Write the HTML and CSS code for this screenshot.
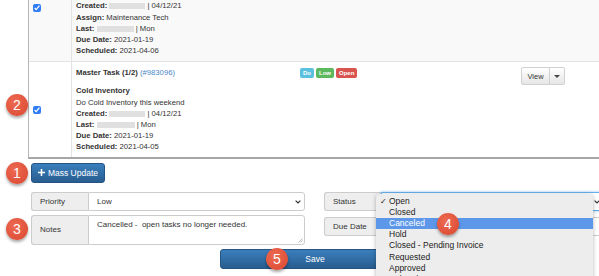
FILE: index.html
```html
<!DOCTYPE html>
<html lang="en">
<head>
  <meta charset="UTF-8" />
  <title>Task List - Mass Update</title>
  <link rel="stylesheet" href="styles.css">
</head>
<body>

<div class="tasks">
  <div class="task striped">
    <div class="check"><input type="checkbox" checked /></div>
    <div class="info">
      <div class="head">
        <div class="title"><b>Master Task (2/2)</b> <a href="#">(#983095)</a></div>
        <div class="labels">
          <span class="label do">Do</span><span class="label low">Low</span><span class="label open">Open</span>
        </div>
        <div class="btn-group">
          <button class="btn-view">View</button><button class="btn-caret"><span class="caret"></span></button>
        </div>
      </div>
      <div class="line"><b>Cold Inventory</b></div>
      <div class="line">Do Cold Inventory this weekend</div>
      <div class="line"><b>Created:</b> <span class="redact r-created"></span> | 04/12/21</div>
      <div class="line"><b>Assign:</b> Maintenance Tech</div>
      <div class="line"><b>Last:</b> <span class="redact r-last"></span> | Mon</div>
      <div class="line"><b>Due Date:</b> 2021-01-19</div>
      <div class="line"><b>Scheduled:</b> 2021-04-06</div>
    </div>
  </div>

  <div class="task">
    <div class="check"><input type="checkbox" checked /></div>
    <div class="info">
      <div class="head">
        <div class="title"><b>Master Task (1/2)</b> <a href="#">(#983096)</a></div>
        <div class="labels">
          <span class="label do">Do</span><span class="label low">Low</span><span class="label open">Open</span>
        </div>
        <div class="btn-group">
          <button class="btn-view">View</button><button class="btn-caret"><span class="caret"></span></button>
        </div>
      </div>
      <div class="line"><b>Cold Inventory</b></div>
      <div class="line">Do Cold Inventory this weekend</div>
      <div class="line"><b>Created:</b> <span class="redact r-created"></span> | 04/12/21</div>
      <div class="line"><b>Last:</b> <span class="redact r-last2"></span> | Mon</div>
      <div class="line"><b>Due Date:</b> 2021-01-19</div>
      <div class="line"><b>Scheduled:</b> 2021-04-05</div>
    </div>
  </div>
</div>

<div class="mass-row">
  <button class="btn-primary btn-mass">
    <svg width="7" height="7" viewBox="0 0 7 7"><path d="M2.7 0h1.6v2.7H7v1.6H4.3V7H2.7V4.3H0V2.7h2.7z" fill="#fff"/></svg>
    Mass Update
  </button>
</div>

<div class="mass-form">
  <div class="col">
    <div class="group">
      <span class="addon">Priority</span>
      <div class="control select">Low
        <svg class="chev" width="6" height="4" viewBox="0 0 6 4"><path d="M0.6 0.6L3 3L5.4 0.6" fill="none" stroke="#333" stroke-width="1.2"/></svg>
      </div>
    </div>
    <div class="group notes">
      <span class="addon">Notes</span>
      <div class="control textarea">Cancelled -&nbsp; open tasks no longer needed.
        <svg class="grip" width="5" height="5" viewBox="0 0 5 5"><path d="M0.5 4.5L4.5 0.5M2.5 4.5L4.5 2.5" stroke="#999" stroke-width="0.7"/></svg>
      </div>
    </div>
  </div>
  <div class="col">
    <div class="group status">
      <span class="addon">Status</span>
      <div class="control select focus">
        <svg class="chev" width="6" height="4" viewBox="0 0 6 4"><path d="M0.6 0.6L3 3L5.4 0.6" fill="none" stroke="#333" stroke-width="1.2"/></svg>
      </div>
      <ul class="menu">
        <li><span class="tick">✓</span>Open</li>
        <li>Closed</li>
        <li class="active">Canceled</li>
        <li>Hold</li>
        <li>Closed - Pending Invoice</li>
        <li>Requested</li>
        <li>Approved</li>
        <li>Deleted</li>
      </ul>
    </div>
    <div class="group due">
      <span class="addon">Due Date</span>
      <div class="control"></div>
    </div>
  </div>
</div>

<div class="save-row">
  <button class="btn-primary btn-save">Save</button>
</div>

<span class="step s1">1</span>
<span class="step s2">2</span>
<span class="step s3">3</span>
<span class="step s4">4</span>
<span class="step s5">5</span>

</body>
</html>
```

FILE: styles.css
```css
body {
  margin: 0;
  font-family: 'Liberation Sans', Arial, sans-serif;
  color: #333;
  background: #fff;
  overflow: hidden;
  position: relative;
  height: 276px;
}

/* task table (page is scrolled, first row is cut at the top) */
.tasks {
  margin: -45px 0 0 28px;
  border-left: 1px solid #b5b5b5;
  border-bottom: 2px solid #a6a6a6;
}

.task {
  display: grid;
  grid-template-columns: 43px 1fr;
  background: #fff;
}

.task.striped {
  background: #f9f9f9;
  border-bottom: 1px solid #e3e3e3;
}

.check {
  border-right: 1px solid #e3e3e3;
  display: flex;
  align-items: center;
  padding-left: 4px;
}

.check input {
  width: 8px;
  height: 8px;
  margin: 0;
  accent-color: #2f7cf6;
}

.info {
  padding: 5px 0 4px 4px;
  font-size: 7.7px;
  line-height: 11.2px;
}

.striped .info {
  padding-bottom: 5px;
}

.head {
  display: flex;
  align-items: flex-start;
  height: 18px;
}

.title {
  width: 224px;
}

.title a {
  color: #4a87c7;
  text-decoration: none;
}

.labels {
  display: flex;
  gap: 2px;
  margin-top: 1px;
}

.label {
  display: inline-block;
  color: #fff;
  font-weight: bold;
  font-size: 6px;
  line-height: 10px;
  padding: 0 3px;
  border-radius: 2px;
}

.label.do { background: #5bc0de; }
.label.low { background: #5cb85c; }
.label.open { background: #d9534f; }

.btn-group {
  display: flex;
  margin-left: auto;
  margin-right: 34px;
}

.btn-group button {
  font-family: inherit;
  font-size: 7.5px;
  color: #333;
  height: 18px;
  background: linear-gradient(#fff, #e6e6e6);
  border: 1px solid #d0d0d0;
  margin: 0;
  padding: 0;
}

.btn-view {
  width: 29px;
  border-radius: 2px 0 0 2px;
}

.btn-caret {
  width: 15px;
  border-left: none !important;
  border-radius: 0 2px 2px 0;
}

.caret {
  display: inline-block;
  border-top: 3px solid #444;
  border-left: 3px solid transparent;
  border-right: 3px solid transparent;
  vertical-align: middle;
}

.redact {
  display: inline-block;
  height: 6px;
  background: #e0e0e0;
  vertical-align: middle;
}

.r-created { width: 36px; }
.r-last { width: 37px; }
.r-last2 { width: 38px; }

/* mass update */
.mass-row {
  padding: 4px 0 0 31px;
}

.btn-primary {
  font-family: inherit;
  color: #fff;
  background: linear-gradient(#3a7fbd, #285d8f);
  border: 1px solid #255483;
  border-radius: 3px;
  margin: 0;
  cursor: pointer;
}

.btn-mass {
  width: 74px;
  height: 20px;
  font-size: 8.5px;
  padding: 0;
  display: flex;
  align-items: center;
  justify-content: center;
  gap: 3px;
}

.mass-form {
  display: grid;
  grid-template-columns: 274px 280px;
  column-gap: 19px;
  margin: 9px 0 0 31px;
}

.group {
  display: flex;
  height: 19px;
  font-size: 8px;
  position: relative;
}

.addon {
  width: 57px;
  flex: none;
  background: #eee;
  border: 1px solid #ccc;
  border-right: none;
  border-radius: 3px 0 0 3px;
  padding-left: 8px;
  box-sizing: border-box;
  display: flex;
  align-items: center;
}

.control {
  flex: 1;
  border: 1px solid #ccc;
  border-radius: 0 3px 3px 0;
  background: #fff;
  position: relative;
  padding-left: 8px;
  display: flex;
  align-items: center;
}

.chev {
  position: absolute;
  right: 3px;
  top: 7px;
}

.group.notes {
  height: 30px;
  margin-top: 4px;
}

.textarea {
  align-items: flex-start;
  padding-top: 4px;
}

.grip {
  position: absolute;
  right: 1px;
  bottom: 1px;
}

.control.focus {
  border-color: #66afe9;
  box-shadow: 0 0 3px rgba(102, 175, 233, 0.7);
}

.group.due {
  margin-top: 6px;
}

/* open status dropdown */
.menu {
  position: absolute;
  top: 2px;
  left: 52px;
  width: 217px;
  margin: 0;
  padding: 2px 0 0;
  list-style: none;
  background: #ededed;
  border-radius: 4px 4px 0 0;
  box-shadow: 0 1px 4px rgba(0, 0, 0, 0.3);
  font-size: 8.5px;
  line-height: 11.2px;
  color: #222;
  z-index: 2;
}

.menu li {
  padding-left: 13px;
  position: relative;
  height: 11.2px;
}

.menu .tick {
  position: absolute;
  left: 4px;
  font-size: 7.5px;
}

.menu li.active {
  background: #5d97e9;
  color: #fff;
}

.save-row {
  padding: 3px 0 0 220px;
}

.btn-save {
  width: 190px;
  height: 20px;
  font-size: 8.5px;
}

/* numbered step markers */
.step {
  position: absolute;
  width: 22px;
  height: 22px;
  margin: -11px 0 0 -11px;
  border-radius: 50%;
  background: radial-gradient(circle at 40% 35%, #ee6a52, #d9462f);
  box-shadow: 0 2px 3px rgba(0, 0, 0, 0.35);
  color: #fff;
  font-size: 14px;
  line-height: 22px;
  text-align: center;
  z-index: 3;
}

.s1 { left: 17px; top: 173px; }
.s2 { left: 17px; top: 105px; }
.s3 { left: 17px; top: 229px; }
.s4 { left: 448px; top: 224px; }
.s5 { left: 277px; top: 259px; }
```
